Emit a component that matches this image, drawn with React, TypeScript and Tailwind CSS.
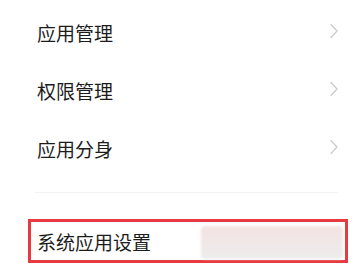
const items = ['应用管理', '权限管理', '应用分身'];

function Chevron() {
  return (
    <svg width="10" height="16" viewBox="0 0 10 16" fill="none" className="mt-[-2px]">
      <polyline points="2,1.5 8,8 2,14.5" stroke="#cccccc" strokeWidth="1.3" strokeLinecap="round" strokeLinejoin="round" />
    </svg>
  );
}

export default function App() {
  return (
    <div
      className="w-[364px] h-[272px] bg-white overflow-hidden text-[#1c1c1c]"
      style={{ fontFamily: '"Noto Sans CJK SC", "Noto Sans", sans-serif' }}
    >
      <div className="pt-[3px]">
        {items.map((t) => (
          <div key={t} className="h-[58px] flex items-center justify-between pl-[37px] pr-[25px]">
            <span className="text-[19px] leading-none">{t}</span>
            <Chevron />
          </div>
        ))}
      </div>
      <div className="mt-[15px] ml-[35px] mr-[26px] h-px bg-[#f2f2f2]" />
      <div className="mt-[26px] ml-[28px] mr-[16px] h-[44px] border-[3px] border-[#e63a40] flex items-center justify-between pl-[6px] pr-[2px]">
        <span className="text-[19px] leading-none">系统应用设置</span>
        <div className="w-[142px] h-[33px] mt-[3px] rounded-[4px] bg-gradient-to-b from-[#f4e2e2] to-[#ececec] blur-[1.5px]" />
      </div>
    </div>
  );
}
